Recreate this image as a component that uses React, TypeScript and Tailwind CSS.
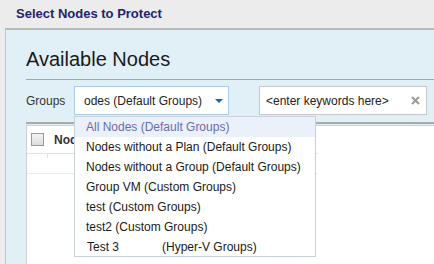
import React from "react";

const items = [
  "Nodes without a Plan (Default Groups)",
  "Nodes without a Group (Default Groups)",
  "Group VM (Custom Groups)",
  "test (Custom Groups)",
  "test2 (Custom Groups)",
];

export default function App() {
  return (
    <div className="relative w-[434px] h-[264px] overflow-hidden bg-[#ececec] font-['Liberation_Sans',Arial,sans-serif] text-[12px] text-[#222]">
      <div className="h-[28px] pl-[16px] flex items-center text-[13px] font-bold text-[#1f2470]">
        Select Nodes to Protect
      </div>
      <div className="ml-[5px] h-[236px] border-l border-t-2 border-l-[#c4c4c4] border-t-[#b9b9b9] bg-[#e1f0f6] pl-[20px]">
        <div className="pt-[18px] pb-[8px] border-b border-[#a6a6a6]">
          <div className="text-[20px] leading-[23px] text-[#1a1a1a]">Available Nodes</div>
        </div>
        <div className="mt-[6px] flex items-center h-[29px]">
          <div className="w-[48px] text-[#333]">Groups</div>
          <div className="w-[155px] h-[29px] bg-white border border-[#a9cbe8] flex items-center pl-[9px] pr-[4px]">
            <span className="flex-1 whitespace-nowrap overflow-hidden">odes (Default Groups)</span>
            <svg width="8" height="4" viewBox="0 0 8 4" className="mr-[1px]">
              <polygon points="0,0 8,0 4,4" fill="#1565b0" />
            </svg>
          </div>
          <div className="ml-[30px] w-[168px] h-[29px] bg-white border border-[#c8c8c8] flex items-center pl-[6px] pr-[6px]">
            <span className="flex-1 whitespace-nowrap">&lt;enter keywords here&gt;</span>
            <svg width="9" height="9" viewBox="0 0 9 9">
              <path d="M1 1 L8 8 M8 1 L1 8" stroke="#9a9a9a" strokeWidth="2" />
            </svg>
          </div>
        </div>
        <div className="mt-[7px] h-[2px] bg-[#a9a9a9]" />
        <div className="mt-[1px] h-[200px] bg-white border-l border-t border-[#d0d0d0]">
          <div className="h-[28px] w-[291px] flex items-center border-b border-[#e2e2e2] pl-[4px]">
            <div className="w-[13px] h-[13px] border border-[#9a9a9a] bg-gradient-to-b from-[#f4f4f4] to-[#dcdcdc]" />
            <span className="ml-[10px] font-bold text-[#333]">Nodes</span>
          </div>
          <div className="h-[20px] w-[291px] border-b border-[#ececec] flex">
            <div className="ml-[20px] w-px h-[4px] bg-[#e2e2e2]" />
          </div>
        </div>
      </div>
      <div className="absolute left-[74px] top-[116px] w-[242px] h-[141px] bg-white border border-[#c9d0de]">
        <div className="h-[20px] flex items-center pl-[11px] bg-[#eaf1fa] text-[#6b6bab] whitespace-nowrap">
          All Nodes (Default Groups)
        </div>
        {items.map((t) => (
          <div key={t} className="h-[20px] flex items-center pl-[11px] text-[#1a1a1a] whitespace-nowrap">
            {t}
          </div>
        ))}
        <div className="h-[19px] flex items-center pl-[12px] text-[#1a1a1a] whitespace-nowrap">
          <span className="w-[75px]">Test 3</span>
          <span>(Hyper-V Groups)</span>
        </div>
      </div>
    </div>
  );
}
